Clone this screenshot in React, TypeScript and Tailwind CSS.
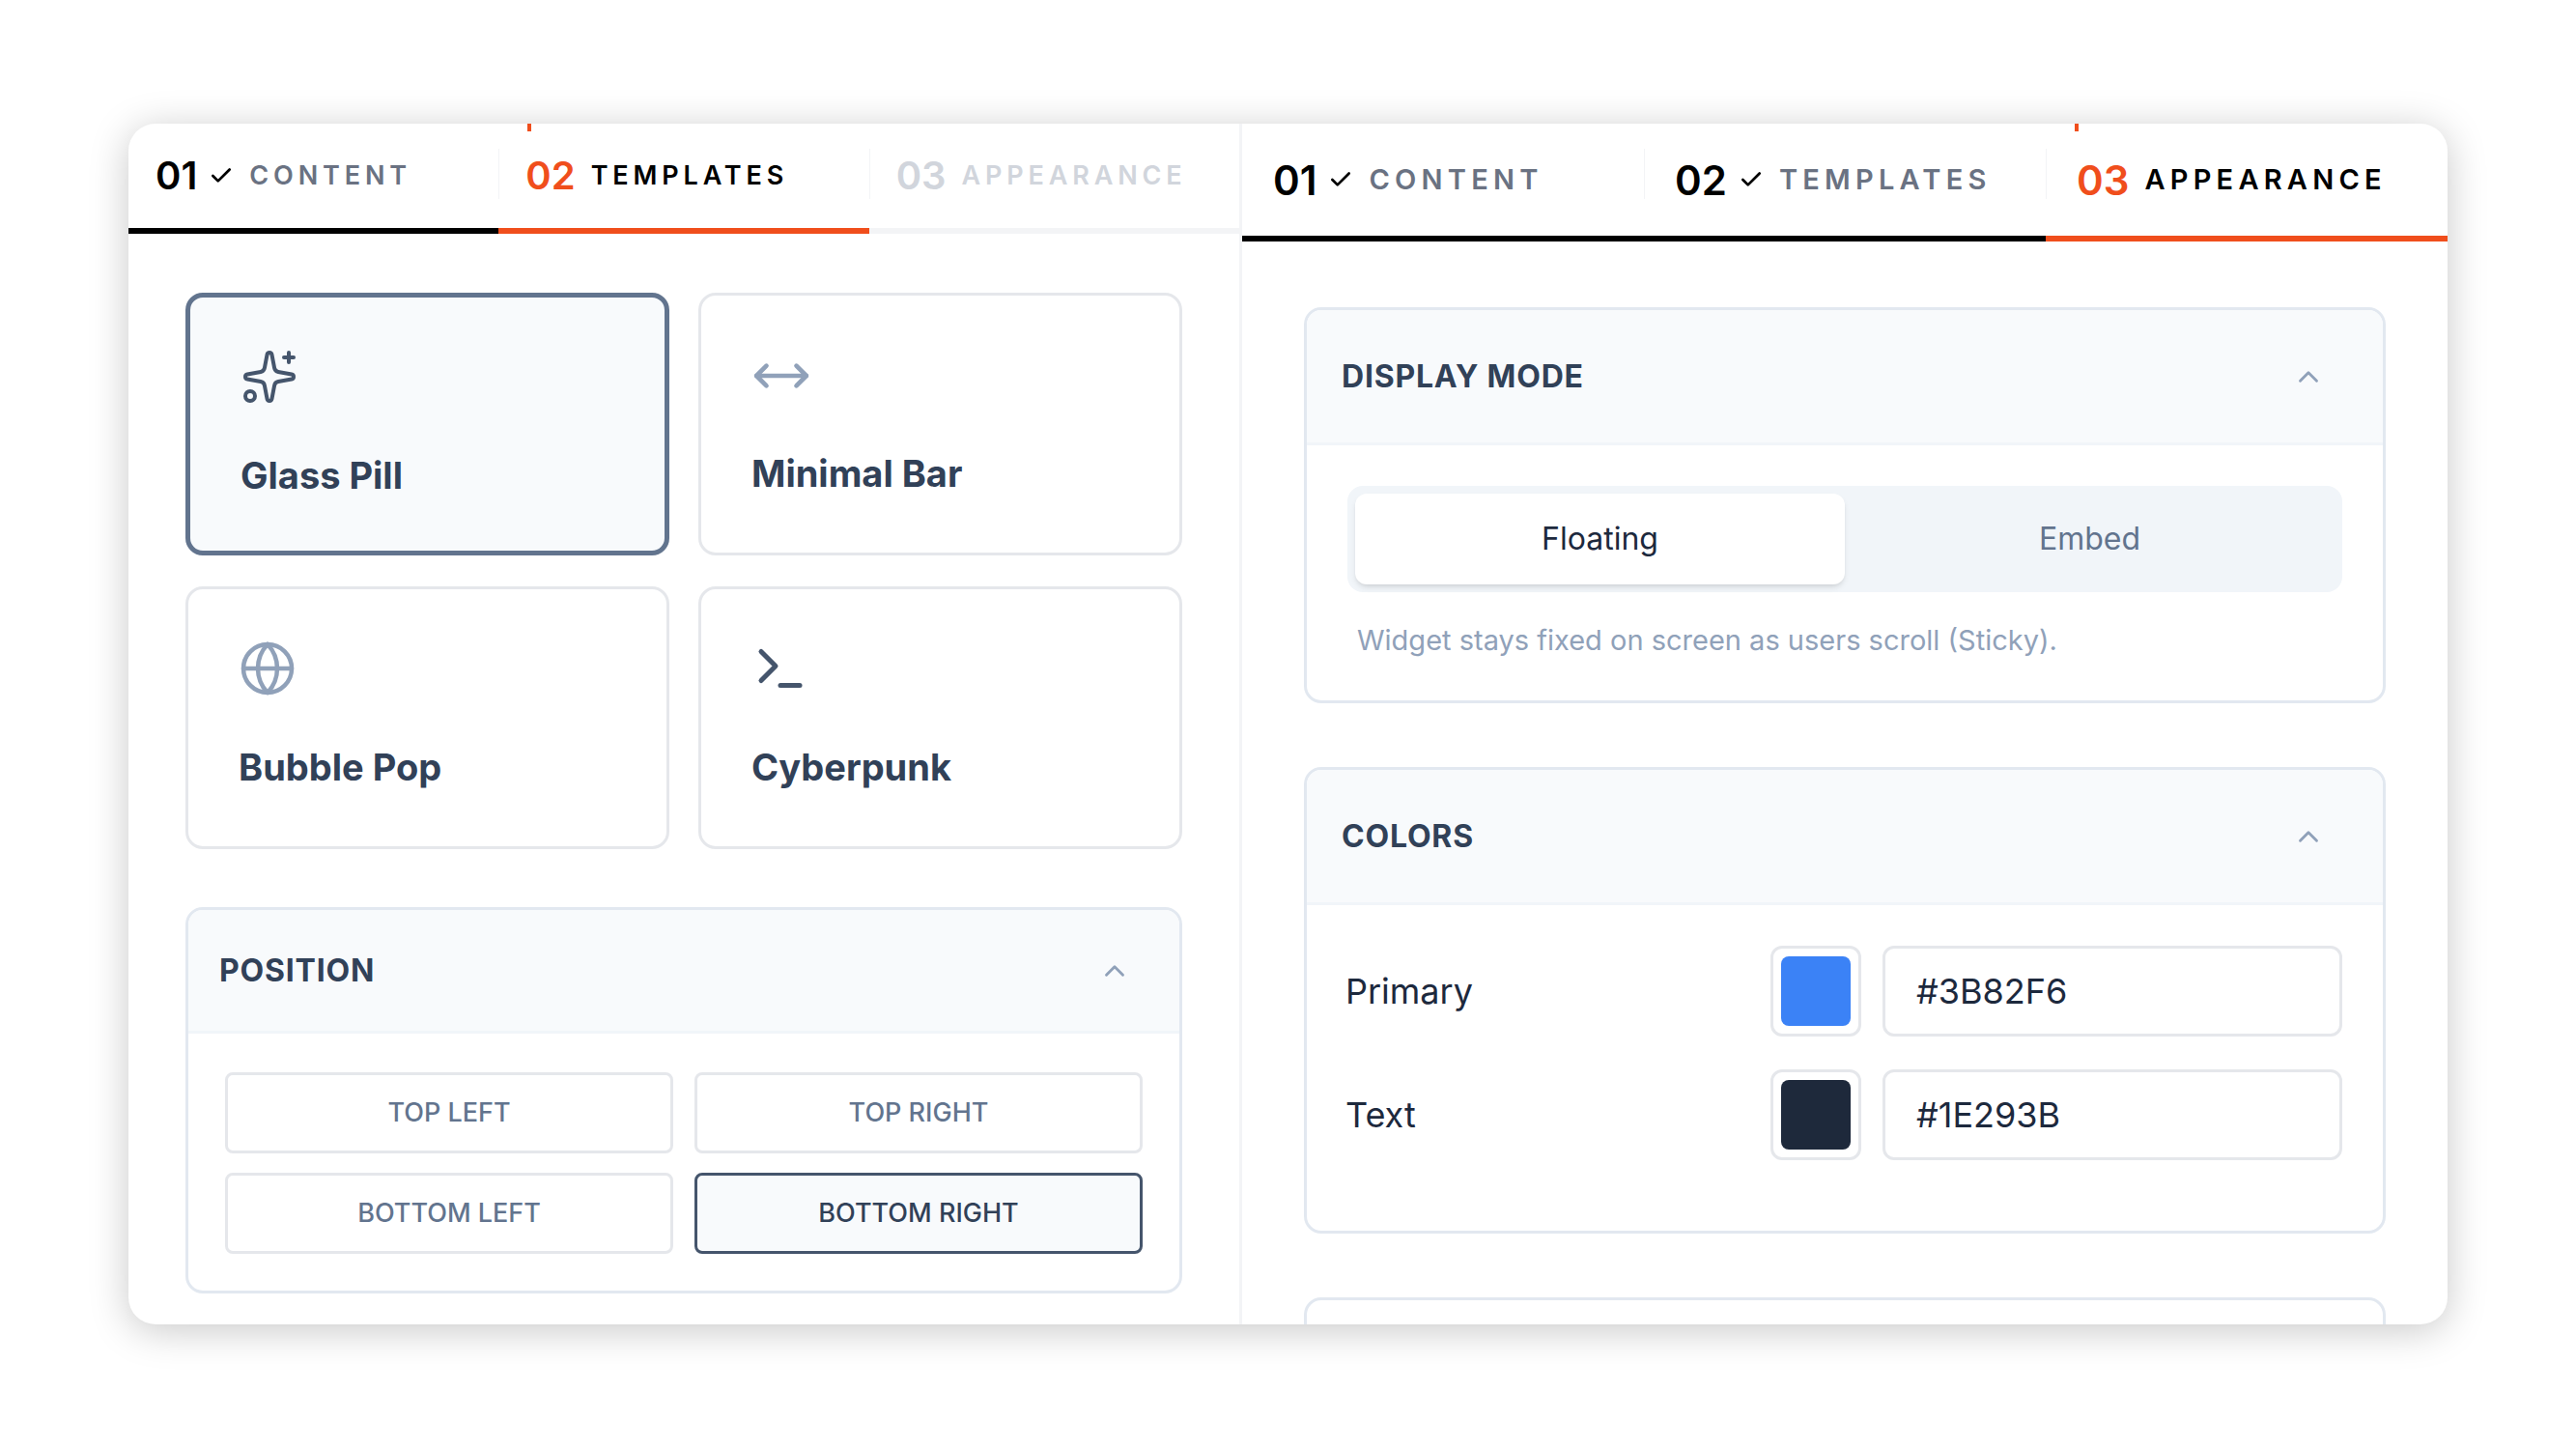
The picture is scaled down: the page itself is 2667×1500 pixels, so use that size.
import React from 'react';
import { Sparkles, MoveHorizontal, Globe, Terminal, ChevronUp, Check } from 'lucide-react';

const font = { fontFamily: 'Inter, "Noto Sans", sans-serif' };

type Tab = { n: string; label: string; state: 'done' | 'active' | 'todo' };

const Tabs: React.FC<{ tabs: Tab[]; big?: boolean }> = ({ tabs, big }) => (
  <div className={`flex shrink-0 ${big ? 'h-[122px]' : 'h-[114px]'}`}>
    {tabs.map((t, i) => (
      <div
        key={t.n}
        className={`relative flex-1 flex items-center ${big ? 'px-8' : 'px-7'} ${
          t.state === 'active' ? 'border-b-[6px] border-[#f04e1c]' : t.state === 'done' ? 'border-b-[6px] border-black' : 'border-b-[6px] border-gray-100'
        }`}
      >
        {i > 0 && <div className="absolute left-0 top-[26px] h-[52px] w-px bg-gray-100" />}
        {t.state === 'active' && <div className="absolute left-[30px] top-0 h-[8px] w-[4px] bg-[#f04e1c]" />}
        <span
          className={`${big ? 'text-[42px]' : 'text-[40px]'} font-semibold ${
            t.state === 'active' ? 'text-[#f04e1c]' : t.state === 'done' ? 'text-black' : 'text-gray-300'
          }`}
        >
          {t.n}
        </span>
        {t.state === 'done' && <Check className="ml-3 w-[26px] h-[26px] text-black" strokeWidth={2.5} />}
        <span
          className={`ml-4 ${big ? 'text-[29px]' : 'text-[27px]'} font-semibold tracking-[0.18em] ${
            t.state === 'active' ? 'text-black' : t.state === 'done' ? 'text-gray-500' : 'text-gray-300'
          }`}
        >
          {t.label}
        </span>
      </div>
    ))}
  </div>
);

const TemplateCard: React.FC<{ icon: React.ReactNode; title: string; selected?: boolean }> = ({ icon, title, selected }) => (
  <div
    className={`h-[272px] rounded-[18px] px-[52px] pt-[52px] ${
      selected ? 'border-[5px] border-slate-500 bg-slate-50 px-[49px] pt-[49px]' : 'border-[3px] border-gray-200 bg-white'
    }`}
  >
    <div className="h-[60px]">{icon}</div>
    <div className="mt-[44px] text-[38px] font-bold text-slate-700">{title}</div>
  </div>
);

const SectionHeader: React.FC<{ title: string; h: string; px: string }> = ({ title, h, px }) => (
  <div className={`${h} ${px} flex items-center justify-between bg-slate-50 border-b-[3px] border-slate-100`}>
    <span className="text-[32px] font-bold text-slate-700 tracking-wide">{title}</span>
    <ChevronUp className="w-[34px] h-[34px] text-slate-400" strokeWidth={2} />
  </div>
);

const PosButton: React.FC<{ label: string; selected?: boolean }> = ({ label, selected }) => (
  <div
    className={`h-[84px] rounded-lg flex items-center justify-center text-[27px] font-medium ${
      selected ? 'border-[3px] border-slate-600 bg-slate-50 text-slate-700' : 'border-[3px] border-gray-200 bg-white text-slate-500'
    }`}
  >
    {label}
  </div>
);

const ColorRow: React.FC<{ label: string; color: string }> = ({ label, color }) => (
  <div className="flex items-center h-[94px]">
    <span className="flex-1 pl-10 text-[36px] text-slate-800">{label}</span>
    <div className="w-[94px] h-[94px] rounded-xl border-[3px] border-gray-200 bg-white flex items-center justify-center">
      <div className="w-[72px] h-[72px] rounded-lg" style={{ backgroundColor: color }} />
    </div>
    <div className="ml-[22px] w-[476px] h-[94px] rounded-xl border-[3px] border-gray-200 bg-white flex items-center px-8 text-[36px] text-slate-800">
      {color.toUpperCase()}
    </div>
  </div>
);

export default function App() {
  return (
    <div style={font} className="w-[2667px] h-[1500px] bg-white pt-[128px] pl-[133px]">
      <div className="w-[2401px] h-[1243px] rounded-[28px] bg-white shadow-[0_6px_40px_rgba(0,0,0,0.22)] overflow-hidden flex">
        <div className="w-[1153px] border-r-[3px] border-gray-100 flex flex-col overflow-hidden">
          <Tabs
            tabs={[
              { n: '01', label: 'CONTENT', state: 'done' },
              { n: '02', label: 'TEMPLATES', state: 'active' },
              { n: '03', label: 'APPEARANCE', state: 'todo' },
            ]}
          />
          <div className="px-[59px] pt-[61px]">
            <div className="grid grid-cols-2 gap-x-[30px] gap-y-[32px]">
              <TemplateCard selected title="Glass Pill" icon={<Sparkles className="w-[60px] h-[60px] text-slate-600" strokeWidth={1.6} />} />
              <TemplateCard title="Minimal Bar" icon={<MoveHorizontal className="w-[62px] h-[62px] text-slate-400" strokeWidth={1.8} />} />
              <TemplateCard title="Bubble Pop" icon={<Globe className="w-[60px] h-[60px] text-slate-400" strokeWidth={1.8} />} />
              <TemplateCard title="Cyberpunk" icon={<Terminal className="w-[60px] h-[60px] text-slate-600" strokeWidth={2} />} />
            </div>
            <div className="mt-[60px] rounded-[18px] border-[3px] border-slate-200 overflow-hidden bg-white h-[400px]">
              <SectionHeader title="POSITION" h="h-[128px]" px="pl-8 pr-[50px]" />
              <div className="grid grid-cols-2 gap-x-[22px] gap-y-[20px] px-[38px] pt-[40px]">
                <PosButton label="TOP LEFT" />
                <PosButton label="TOP RIGHT" />
                <PosButton label="BOTTOM LEFT" />
                <PosButton label="BOTTOM RIGHT" selected />
              </div>
            </div>
          </div>
        </div>
        <div className="flex-1 flex flex-col overflow-hidden">
          <Tabs
            big
            tabs={[
              { n: '01', label: 'CONTENT', state: 'done' },
              { n: '02', label: 'TEMPLATES', state: 'done' },
              { n: '03', label: 'APPEARANCE', state: 'active' },
            ]}
          />
          <div className="px-[64px] pt-[68px] flex flex-col gap-[66px] shrink-0">
            <div className="rounded-[18px] border-[3px] border-slate-200 overflow-hidden h-[410px]">
              <SectionHeader title="DISPLAY MODE" h="h-[140px]" px="pl-9 pr-[60px]" />
              <div className="px-[42px] pt-[42px]">
                <div className="h-[110px] rounded-2xl bg-slate-100 p-[8px] flex">
                  <div className="flex-1 rounded-xl bg-white shadow-md flex items-center justify-center text-[32px] text-slate-800">Floating</div>
                  <div className="flex-1 flex items-center justify-center text-[32px] text-slate-500">Embed</div>
                </div>
                <div className="mt-[28px] pl-[10px] text-[29px] text-slate-400">Widget stays fixed on screen as users scroll (Sticky).</div>
              </div>
            </div>
            <div className="rounded-[18px] border-[3px] border-slate-200 overflow-hidden h-[483px]">
              <SectionHeader title="COLORS" h="h-[140px]" px="pl-9 pr-[60px]" />
              <div className="pr-[42px] pt-[42px] flex flex-col gap-[34px]">
                <ColorRow label="Primary" color="#3B82F6" />
                <ColorRow label="Text" color="#1E293B" />
              </div>
            </div>
            <div className="rounded-t-[18px] border-[3px] border-slate-200 h-[100px]" />
          </div>
        </div>
      </div>
    </div>
  );
}
